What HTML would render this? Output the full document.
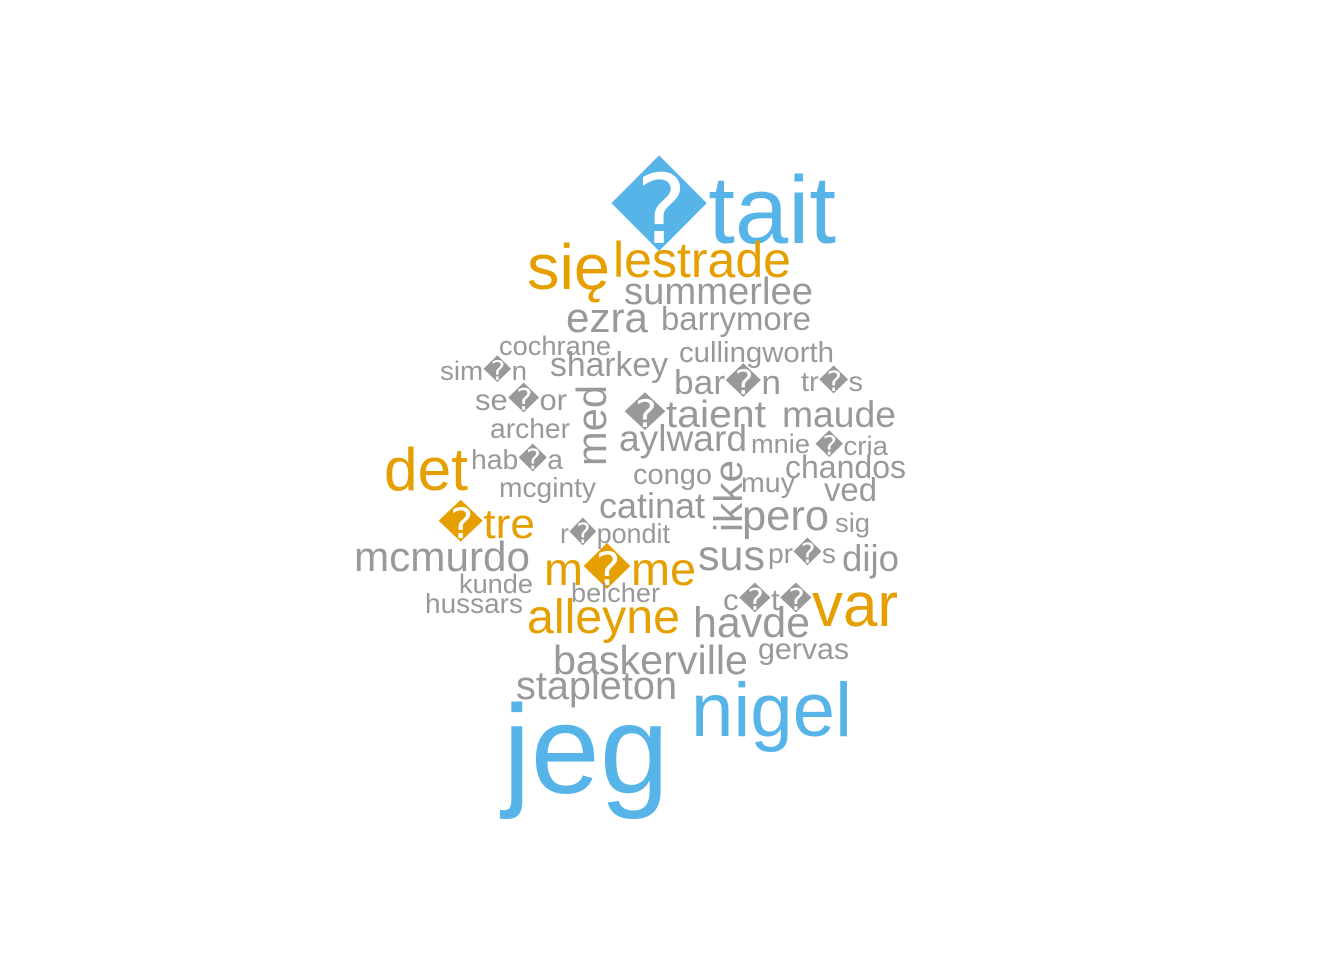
<!DOCTYPE html>
<html><head><meta charset="utf-8"><style>
html,body{margin:0;padding:0;background:#fff;}
svg{display:block}
text{font-family:"Liberation Sans","DejaVu Sans",sans-serif;}
.g{fill:#999999}.b{fill:#56B4E9}.o{fill:#E69F00}
</style></head><body>
<svg width="1344" height="960" xmlns="http://www.w3.org/2000/svg">
<rect width="1344" height="960" fill="#fff"/>
<text class="b" x="610" y="243" font-size="96" textLength="226" lengthAdjust="spacingAndGlyphs">�tait</text>
<text class="b" x="503" y="793" font-size="126" textLength="166" lengthAdjust="spacingAndGlyphs">jeg</text>
<text class="b" x="691" y="736" font-size="76" textLength="161" lengthAdjust="spacingAndGlyphs">nigel</text>
<text class="o" x="527" y="289" font-size="64" textLength="83" lengthAdjust="spacingAndGlyphs">się</text>
<text class="o" x="613" y="277" font-size="50" textLength="178" lengthAdjust="spacingAndGlyphs">lestrade</text>
<text class="g" x="624" y="304" font-size="38" textLength="189" lengthAdjust="spacingAndGlyphs">summerlee</text>
<text class="g" x="566" y="332" font-size="42" textLength="82" lengthAdjust="spacingAndGlyphs">ezra</text>
<text class="g" x="661" y="330" font-size="33" textLength="150" lengthAdjust="spacingAndGlyphs">barrymore</text>
<text class="g" x="499" y="355" font-size="27" textLength="112" lengthAdjust="spacingAndGlyphs">cochrane</text>
<text class="g" x="679" y="362" font-size="29" textLength="155" lengthAdjust="spacingAndGlyphs">cullingworth</text>
<text class="g" x="440" y="380" font-size="27" textLength="87" lengthAdjust="spacingAndGlyphs">sim�n</text>
<text class="g" x="550" y="376" font-size="34" textLength="118" lengthAdjust="spacingAndGlyphs">sharkey</text>
<text class="g" x="674" y="394" font-size="34" textLength="107" lengthAdjust="spacingAndGlyphs">bar�n</text>
<text class="g" x="801" y="391" font-size="28" textLength="62" lengthAdjust="spacingAndGlyphs">tr�s</text>
<text class="g" x="475" y="410" font-size="30" textLength="92" lengthAdjust="spacingAndGlyphs">se�or</text>
<text class="g" transform="translate(606,466) rotate(-90)" font-size="42" textLength="81" lengthAdjust="spacingAndGlyphs">med</text>
<text class="g" x="624" y="427" font-size="38" textLength="142" lengthAdjust="spacingAndGlyphs">�taient</text>
<text class="g" x="782" y="427" font-size="37" textLength="114" lengthAdjust="spacingAndGlyphs">maude</text>
<text class="g" x="490" y="438" font-size="28" textLength="80" lengthAdjust="spacingAndGlyphs">archer</text>
<text class="g" x="619" y="451" font-size="37" textLength="128" lengthAdjust="spacingAndGlyphs">aylward</text>
<text class="g" x="751" y="453" font-size="27" textLength="59" lengthAdjust="spacingAndGlyphs">mnie</text>
<text class="g" x="815" y="455" font-size="27" textLength="73" lengthAdjust="spacingAndGlyphs">�cria</text>
<text class="o" x="384" y="490" font-size="60" textLength="84" lengthAdjust="spacingAndGlyphs">det</text>
<text class="g" x="471" y="469" font-size="28" textLength="92" lengthAdjust="spacingAndGlyphs">hab�a</text>
<text class="g" x="785" y="478" font-size="32" textLength="121" lengthAdjust="spacingAndGlyphs">chandos</text>
<text class="g" x="633" y="484" font-size="29" textLength="79" lengthAdjust="spacingAndGlyphs">congo</text>
<text class="g" transform="translate(742,532) rotate(-90)" font-size="40" textLength="72" lengthAdjust="spacingAndGlyphs">ikke</text>
<text class="g" x="741" y="492" font-size="28" textLength="54" lengthAdjust="spacingAndGlyphs">muy</text>
<text class="g" x="824" y="501" font-size="33" textLength="53" lengthAdjust="spacingAndGlyphs">ved</text>
<text class="g" x="499" y="497" font-size="28" textLength="97" lengthAdjust="spacingAndGlyphs">mcginty</text>
<text class="g" x="599" y="518" font-size="36" textLength="106" lengthAdjust="spacingAndGlyphs">catinat</text>
<text class="g" x="742" y="530" font-size="43" textLength="87" lengthAdjust="spacingAndGlyphs">pero</text>
<text class="g" x="835" y="532" font-size="27" textLength="35" lengthAdjust="spacingAndGlyphs">sig</text>
<text class="o" x="438" y="538" font-size="42" textLength="97" lengthAdjust="spacingAndGlyphs">�tre</text>
<text class="g" x="560" y="543" font-size="28" textLength="110" lengthAdjust="spacingAndGlyphs">r�pondit</text>
<text class="g" x="354" y="571" font-size="42" textLength="176" lengthAdjust="spacingAndGlyphs">mcmurdo</text>
<text class="o" x="544" y="585" font-size="46" textLength="152" lengthAdjust="spacingAndGlyphs">m�me</text>
<text class="g" x="698" y="570" font-size="43" textLength="67" lengthAdjust="spacingAndGlyphs">sus</text>
<text class="g" x="768" y="563" font-size="28" textLength="68" lengthAdjust="spacingAndGlyphs">pr�s</text>
<text class="g" x="842" y="571" font-size="37" textLength="57" lengthAdjust="spacingAndGlyphs">dijo</text>
<text class="g" x="459" y="593" font-size="27" textLength="74" lengthAdjust="spacingAndGlyphs">kunde</text>
<text class="g" x="571" y="602" font-size="27" textLength="89" lengthAdjust="spacingAndGlyphs">belcher</text>
<text class="g" x="425" y="613" font-size="28" textLength="98" lengthAdjust="spacingAndGlyphs">hussars</text>
<text class="g" x="723" y="610" font-size="30" textLength="89" lengthAdjust="spacingAndGlyphs">c�t�</text>
<text class="o" x="812" y="626" font-size="62" textLength="86" lengthAdjust="spacingAndGlyphs">var</text>
<text class="o" x="527" y="633" font-size="48" textLength="153" lengthAdjust="spacingAndGlyphs">alleyne</text>
<text class="g" x="693" y="637" font-size="43" textLength="117" lengthAdjust="spacingAndGlyphs">havde</text>
<text class="g" x="758" y="659" font-size="30" textLength="91" lengthAdjust="spacingAndGlyphs">gervas</text>
<text class="g" x="553" y="674" font-size="41" textLength="195" lengthAdjust="spacingAndGlyphs">baskerville</text>
<text class="g" x="516" y="699" font-size="40" textLength="161" lengthAdjust="spacingAndGlyphs">stapleton</text>
</svg>
</body></html>
